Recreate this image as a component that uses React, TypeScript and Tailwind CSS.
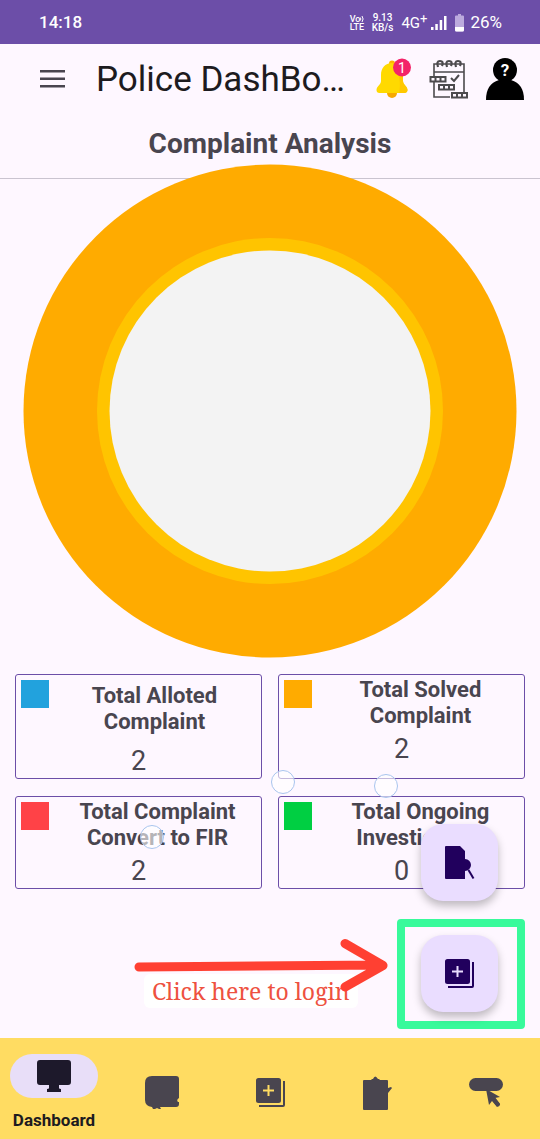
import React from "react";

type Stat = {
  lines: [string, string];
  value: number;
  swatch: string;
  heading: string;
  number: string;
};

const stats: Stat[] = [
  { lines: ["Total Alloted", "Complaint"], value: 2, swatch: "bg-[#22a2dd]", heading: "pt-2 pl-8", number: "pt-3" },
  { lines: ["Total Solved", "Complaint"], value: 2, swatch: "bg-[#ffab00]", heading: "pt-0.5 pl-[38px]", number: "pt-1.5" },
  { lines: ["Total Complaint", "Convert to FIR"], value: 2, swatch: "bg-[#ff4247]", heading: "pt-0.5 pl-[38px]", number: "pt-1.5" },
  { lines: ["Total Ongoing", "Investigation"], value: 0, swatch: "bg-[#00cf42]", heading: "pt-0.5 pl-[38px]", number: "pt-1.5" },
];

function StatusBar() {
  return (
    <div className="flex h-11 items-center justify-between bg-[#6c4ea8] pr-[38px] pl-[39px] text-white">
      <span className="pt-0.5 text-[17px] font-medium">14:18</span>
      <div className="flex items-center pt-0.5">
        <div className="flex w-[14px] flex-col text-[9px] leading-[8px] font-medium">
          <span className="flex items-center">
            Vo
            <svg className="h-2 w-1 shrink-0" viewBox="0 0 4 8" fill="none" stroke="currentColor" aria-hidden="true">
              <path d="M.3 2.5Q1.4 4 .3 5.5M2 1Q4.2 4 2 7" />
            </svg>
          </span>
          <span>LTE</span>
        </div>
        <div className="ml-2 text-center text-[10px] leading-[10px] font-medium">
          <div>9.13</div>
          <div>KB/s</div>
        </div>
        <span className="ml-2 flex items-start text-[15px] leading-4">
          4G<span className="-mt-1 text-[13px]">+</span>
        </span>
        <svg className="ml-1 h-4 w-4" viewBox="0 0 16 16" fill="currentColor" aria-hidden="true">
          <path d="M0 12h2.5v3H0zM4.3 9h2.5v6H4.3zM8.7 5h2.5v10H8.7zM13 1h2.5v14H13z" />
        </svg>
        <svg className="ml-2 h-[18px] w-[9px]" viewBox="0 0 9 18" aria-hidden="true">
          <path d="M3 0h3v1.5h2q1 0 1 1V16q0 1.500-1.500 1.500h-6Q0 17.500 0 16V2.500q0-1 1-1h2z" fill="#bcaadd" />
          <path d="M0 13h9v3q0 1.500-1.500 1.500h-6Q0 17.500 0 16z" fill="#fff" />
        </svg>
        <span className="ml-[6px] text-[17px]">26%</span>
      </div>
    </div>
  );
}

function BellIcon() {
  return (
    <svg className="h-[42px] w-9" viewBox="0 0 36 42" aria-hidden="true">
      <circle cx="16" cy="35" r="5" fill="#f7a900" />
      <circle cx="16" cy="5.500" r="3" fill="#ffb600" />
      <path d="M16 5c7 0 11 5.500 11 12v6c0 4 4.500 5 4.500 9 0 2-1.500 3-3 3H3.500c-2 0-3-1-3-3 0-4 4.500-5 4.500-9v-6C5 10 9 5 16 5z" fill="#ffd900" />
      <path d="M16 5c7 0 11 5.500 11 12v6c0 4 4.500 5 4.500 9 0 2-1.500 3-3 3H23c2-8 1-22-7-30z" fill="#ffc800" />
      <circle cx="26" cy="9.500" r="9" fill="#f32368" />
      <text x="26" y="14.500" textAnchor="middle" fontSize="14" fill="#fff">1</text>
    </svg>
  );
}

function PlannerIcon() {
  return (
    <svg className="h-10 w-10" viewBox="0 0 40 40" fill="none" stroke="#4c4a4d" strokeWidth="1.600" aria-hidden="true">
      <path d="M5 17V5h30v28M5 22v16h16M5 13h30" />
      <path d="M9 8q-2-6 2-6t2 5M18 8q-2-6 2-6t2 5M27 8q-2-6 2-6t2 5" strokeWidth="2.200" />
      <path d="M22 19l3 3 5-6" strokeWidth="2" />
      <path d="M1.500 18h15v4.500h-15zM6.500 18v4.500M11.500 18v4.500M10 26h15v4.500H10zM15 26v4.500M20 26v4.500M23 34h15v4.500H23zM28 34v4.500M33 34v4.500" strokeWidth="2" />
    </svg>
  );
}

function PersonIcon() {
  return (
    <svg className="h-[42px] w-10" viewBox="0 0 40 42" aria-hidden="true">
      <path d="M1 42c0-11 4-17 13-20h12c9 3 13 9 13 20z" />
      <circle cx="20" cy="12" r="12" />
      <text x="20" y="18" textAnchor="middle" fontSize="17" fontWeight="700" fill="#fff">?</text>
    </svg>
  );
}

function LibraryAddIcon({ className }: { className: string }) {
  return (
    <svg className={className} viewBox="0 0 29 29" fill="currentColor" aria-hidden="true">
      <path fillRule="evenodd" d="M2.500 0h20Q25 0 25 2.500v20q0 2.500-2.500 2.500h-20Q0 25 0 22.500v-20Q0 0 2.500 0zM11.500 7v4.500H7v2h4.500V18h2v-4.500H18v-2h-4.500V7z" />
      <path d="M27 3h2v24q0 2-2 2H3v-2h24z" />
    </svg>
  );
}

function FileSearchIcon() {
  return (
    <svg className="h-[34px] w-[30px]" viewBox="0 0 30 34" fill="currentColor" aria-hidden="true">
      <path d="M1 0h14l5 5v8a6 6 0 1 1 0 12v8H1q-1 0-1-1V1q0-1 1-1z" />
      <path d="M23.500 24l5 8.500" stroke="currentColor" strokeWidth="2" />
    </svg>
  );
}

function NavIcon({ name }: { name: string }) {
  if (name === "Dashboard")
    return (
      <svg className="h-8 w-[34px]" viewBox="0 0 34 32" fill="#1d192b" aria-hidden="true">
        <path d="M3 0h28q3 0 3 3v19q0 3-3 3H22v3q0 1 2 1v3H10v-3q2 0 2-1v-3H3q-3 0-3-3V3q0-3 3-3z" />
      </svg>
    );
  if (name === "Records")
    return (
      <svg className="h-[34px] w-[34px]" viewBox="0 0 34 34" fill="currentColor" aria-hidden="true">
        <path d="M7 0h24q3 0 3 3v19q-3 2-1 4h1v2q0 3-3 3H15l1 2h-2l-2-1-2 1H8l-1-2q-7-1-7-7V7q0-7 7-7z" />
      </svg>
    );
  if (name === "Add") return <LibraryAddIcon className="h-[29px] w-[29px]" />;
  if (name === "Tasks")
    return (
      <svg className="h-[34px] w-[30px]" viewBox="0 0 30 34" fill="currentColor" aria-hidden="true">
        <path d="M1 4h7l1-1h1q2-5 5 0h1l1 1h7q1 0 1 1v7l3-1 1 1-4 5v16q0 1-1 1H1q-1 0-1-1V5q0-1 1-1z" />
      </svg>
    );
  return (
    <svg className="h-[30px] w-[34px]" viewBox="0 0 34 30" fill="currentColor" aria-hidden="true">
      <rect width="34" height="13" rx="6.500" />
      <path d="M17 11l14 8-5 1 5 6-3 3-5-6-3 4z" />
      <path d="M24 20l5 6.500" stroke="currentColor" strokeWidth="4" strokeLinecap="round" />
    </svg>
  );
}

const destinations = ["Dashboard", "Records", "Add", "Tasks", "Actions"];

export default function App() {
  return (
    <div className="relative flex min-h-screen flex-col overflow-hidden bg-[#fef7ff] font-['Roboto',sans-serif] text-[#49454f]">
      <StatusBar />

      <header className="flex h-[70px] items-center pr-[15px] pl-10">
        <button type="button" aria-label="Open menu" className="shrink-0">
          <svg className="h-[18px] w-[25px]" viewBox="0 0 25 18" fill="#49454f" aria-hidden="true">
            <path d="M0 0h25v2.500H0zM0 7.500h25V10H0zM0 15h25v2.500H0z" />
          </svg>
        </button>
        <h1 className="ml-[31px] min-w-0 flex-1 pt-0.5 text-[35px] leading-[44px] whitespace-nowrap text-[#1d1b20]">Police DashBo…</h1>
        <div className="flex shrink-0 items-center">
          <button type="button" aria-label="Notifications"><BellIcon /></button>
          <button type="button" aria-label="Planner" className="ml-[17px]"><PlannerIcon /></button>
          <button type="button" aria-label="Profile" className="ml-4"><PersonIcon /></button>
        </div>
      </header>

      <main className="flex flex-col">
        <h2 className="flex h-[65px] items-center justify-center border-b border-[#cac4d0] pb-1 text-[28px] font-bold">Complaint Analysis</h2>
        <div className="-mt-[15px] px-[23px]">
          <svg className="block w-full" viewBox="0 0 494 494" role="img" aria-label="Complaint chart">
            <circle cx="247" cy="247" r="246.500" fill="#ffab00" />
            <circle cx="247" cy="247" r="173" fill="#ffc400" />
            <circle cx="247" cy="247" r="160.500" fill="#f3f3f3" />
          </svg>
        </div>
        <div className="mt-4 grid grid-cols-2 gap-x-4 gap-y-[17px] px-[15px]">
          {stats.map((s) => (
            <section key={s.lines.join(" ")} className="relative rounded-[3px] border border-[#6c4ea8] pb-[3px]">
              <span className={`absolute top-[5px] left-[5px] size-7 ${s.swatch}`} />
              <h3 className={`text-center text-[22px] leading-[26px] font-bold ${s.heading}`}>
                {s.lines[0]}
                <br />
                {s.lines[1]}
              </h3>
              <p className={`text-center text-[27px] leading-7 ${s.number}`}>{s.value}</p>
            </section>
          ))}
        </div>
      </main>

      <nav className="mt-auto flex h-[101px] bg-[#ffdc62]" aria-label="Main">
        {destinations.map((name) => (
          <a key={name} href="#" aria-label={name} className="flex flex-1 flex-col items-center justify-center pt-2">
            {name === "Dashboard" ? (
              <>
                <span className="flex h-11 w-[88px] items-center justify-center rounded-full bg-[#e8def8]">
                  <NavIcon name={name} />
                </span>
                <span className="mt-[10px] text-[17px] leading-6 font-bold text-[#1d1b20]">Dashboard</span>
              </>
            ) : (
              <NavIcon name={name} />
            )}
          </a>
        ))}
      </nav>

      <span className="absolute top-[770px] left-[271px] size-6 rounded-full border border-[#a9c5ee] bg-white/60" />
      <span className="absolute top-[774px] left-[374px] size-6 rounded-full border border-[#a9c5ee] bg-white/60" />
      <span className="absolute top-[825px] left-[140px] size-6 rounded-full border border-[#a9c5ee] bg-white/60" />

      <div className="absolute right-[15px] bottom-[110px] h-[110px] w-32 rounded-[4px] border-8 border-[#38fa9b]" />
      <div className="absolute right-[42px] bottom-[127px] flex flex-col gap-[34px] text-[#21005d]">
        <button type="button" aria-label="Search records" className="flex size-[77px] items-center justify-center rounded-[22px] bg-[#eaddff] shadow-[0_5px_8px_rgba(0,0,0,0.25)]">
          <FileSearchIcon />
        </button>
        <button type="button" aria-label="Add complaint" className="flex size-[77px] items-center justify-center rounded-[22px] bg-[#eaddff] shadow-[0_5px_8px_rgba(0,0,0,0.25)]">
          <LibraryAddIcon className="h-[29px] w-[29px]" />
        </button>
      </div>

      <p className="absolute bottom-[131px] left-36 rounded-md bg-white px-2 text-[23px] leading-[34px] whitespace-nowrap text-[#ee5140] font-['Noto_Serif','Liberation_Serif',serif]">Click here to login</p>
      <svg className="absolute bottom-[144px] left-[134px] h-[60px] w-[256px]" viewBox="0 0 256 60" fill="none" stroke="#ff4032" strokeWidth="9" strokeLinecap="round" strokeLinejoin="round" aria-hidden="true">
        <path d="M5 32L248 30M211 8.500L249 30.500L211 52" />
      </svg>
    </div>
  );
}
